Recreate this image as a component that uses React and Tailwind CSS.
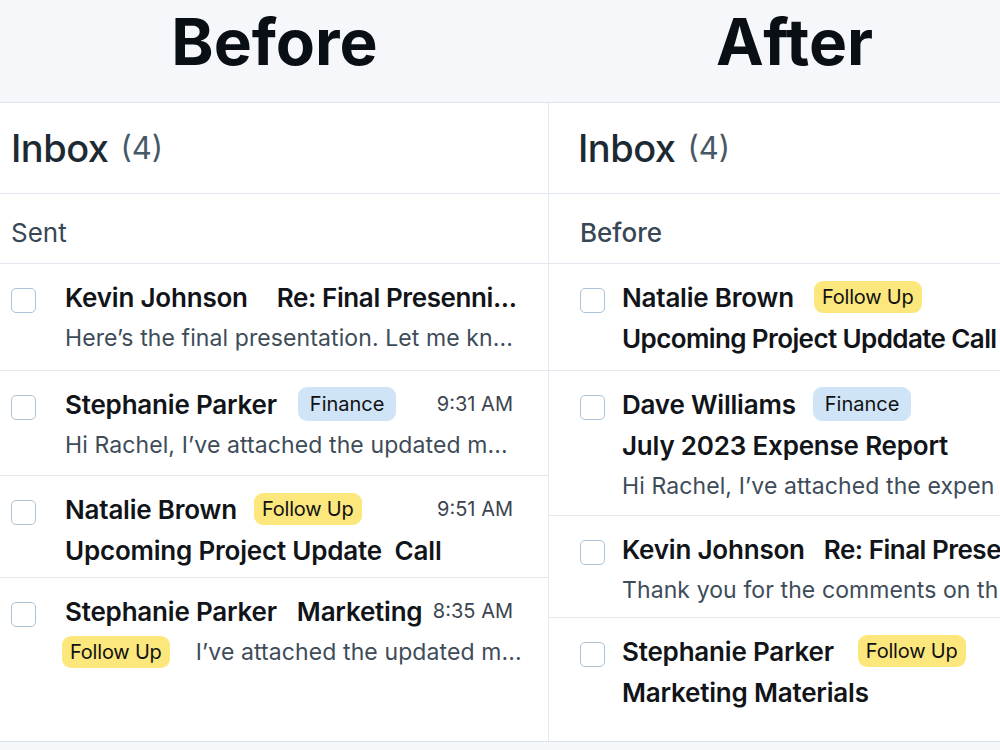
import React from 'react';

const Checkbox = () => (
    <div className="pt-[9px] shrink-0">
        <div className="w-[25px] h-[25px] rounded-[5px] border-[1.5px] border-[#adc2d4] bg-white" />
    </div>
);

const Badge = ({ color, children }) => (
    <span
        className={
            color === 'blue'
                ? 'inline-flex items-center h-[34px] px-[12px] rounded-[9px] bg-[#cfe4f6] text-[20px] text-[#111] font-normal'
                : 'inline-flex items-center h-[32px] px-[8px] rounded-[9px] bg-[#fce77c] text-[20px] text-[#111] font-normal tracking-[-0.2px]'
        }
    >
        {children}
    </span>
);

const Name = ({ children, tight }) => (
    <span className={`text-[26px] font-semibold text-[#111418] ${tight ? 'tracking-[-0.6px]' : 'tracking-[-0.2px]'}`}>{children}</span>
);

const Preview = ({ children }) => (
    <span className="text-[23px] text-[#3e4c59] tracking-[0.1px]">{children}</span>
);

const Time = ({ children }) => (
    <span className="ml-auto text-[20px] text-[#3b4550]">{children}</span>
);

// one mail row: checkbox + stacked lines
const Row = ({ h, left, gap, children, last }) => (
    <div className={`flex pt-[15px] ${left} ${gap} ${h} ${last ? 'flex-1' : 'border-b border-[#e4e9ef]'}`}>
        <Checkbox />
        <div className="flex flex-col flex-1 min-w-0">{children}</div>
    </div>
);

const Line1 = ({ children }) => <div className="h-9 flex items-center whitespace-nowrap">{children}</div>;
const Line2 = ({ children }) => <div className="h-[46px] flex items-center whitespace-nowrap">{children}</div>;

const App = () => {
    return (
        <div className="w-[1000px] h-[750px] bg-[#f6f7fa] flex flex-col overflow-hidden" style={{ fontFamily: 'Inter, "Noto Sans", sans-serif' }}>
            {/* Titles */}
            <div className="h-[102px] flex shrink-0">
                <div className="w-[549px] text-center pt-[10px] text-[64px] leading-none font-bold text-[#0a0e15]">Before</div>
                <div className="flex-1 text-center pl-[40px] pt-[10px] text-[64px] leading-none font-bold text-[#0a0e15]">After</div>
            </div>

            {/* Panels */}
            <div className="h-[640px] flex bg-white border-y border-[#dde3ea] shrink-0">
                {/* Before */}
                <div className="w-[549px] flex flex-col border-r border-[#e4e9ef]">
                    <div className="h-[91px] flex items-center px-[11px] border-b border-[#e0e6ed] shrink-0">
                        <span className="text-[38px] font-medium text-[#1e2a33] tracking-[-0.5px]">Inbox</span>
                        <span className="ml-[12px] text-[31px] text-[#475866]">(4)</span>
                    </div>
                    <div className="h-[70px] flex items-center pt-[8px] px-[11px] border-b border-[#e4e9ef] shrink-0">
                        <span className="text-[26px] text-[#384754]">Sent</span>
                    </div>

                    <Row h="h-[107px]" left="pl-[11px] pr-[31px]" gap="gap-[29px]">
                        <Line1>
                            <Name>Kevin Johnson</Name>
                            <span className="ml-[29px] text-[26px] font-semibold text-[#111418] tracking-[-0.4px]">Re: Final Presenni...</span>
                        </Line1>
                        <Line2><Preview>Here’s the final presentation. Let me kn...</Preview></Line2>
                    </Row>
                    <Row h="h-[105px]" left="pl-[11px] pr-[35px]" gap="gap-[29px]">
                        <Line1>
                            <Name>Stephanie Parker</Name>
                            <span className="ml-[21px]"><Badge color="blue">Finance</Badge></span>
                            <Time>9:31 AM</Time>
                        </Line1>
                        <Line2><Preview>Hi Rachel, I’ve attached the updated m...</Preview></Line2>
                    </Row>
                    <Row h="h-[102px]" left="pl-[11px] pr-[35px]" gap="gap-[29px]">
                        <Line1>
                            <Name>Natalie Brown</Name>
                            <span className="ml-[17px]"><Badge color="yellow">Follow Up</Badge></span>
                            <Time>9:51 AM</Time>
                        </Line1>
                        <Line2><Name>Upcoming Project Update&nbsp; Call</Name></Line2>
                    </Row>
                    <Row left="pl-[11px] pr-[35px]" gap="gap-[29px]" last>
                        <Line1>
                            <Name>Stephanie Parker</Name>
                            <span className="ml-[20px]"><Name>Marketing</Name></span>
                            <Time>8:35 AM</Time>
                        </Line1>
                        <Line2>
                            <span className="-ml-[3px]"><Badge color="yellow">Follow Up</Badge></span>
                            <span className="ml-[26px]"><Preview>I’ve attached the updated m...</Preview></span>
                        </Line2>
                    </Row>
                </div>

                {/* After */}
                <div className="flex-1 min-w-0 flex flex-col overflow-hidden">
                    <div className="h-[91px] flex items-center pl-[29px] border-b border-[#e0e6ed] shrink-0 whitespace-nowrap">
                        <span className="text-[38px] font-medium text-[#1e2a33] tracking-[-0.5px]">Inbox</span>
                        <span className="ml-[12px] text-[31px] text-[#475866]">(4)</span>
                    </div>
                    <div className="h-[70px] flex items-center pt-[8px] pl-[31px] border-b border-[#e4e9ef] shrink-0">
                        <span className="text-[26px] font-medium text-[#384754]">Before</span>
                    </div>

                    <Row h="h-[107px]" left="pl-[31px]" gap="gap-[17px]">
                        <Line1>
                            <Name>Natalie Brown</Name>
                            <span className="ml-[20px]"><Badge color="yellow">Follow Up</Badge></span>
                        </Line1>
                        <Line2><Name tight>Upcoming Project Upddate Call</Name></Line2>
                    </Row>
                    <Row h="h-[145px]" left="pl-[31px]" gap="gap-[17px]">
                        <Line1>
                            <Name>Dave Williams</Name>
                            <span className="ml-[17px]"><Badge color="blue">Finance</Badge></span>
                        </Line1>
                        <div className="h-[46px] flex items-center whitespace-nowrap"><Name>July 2023 Expense Report</Name></div>
                        <div className="h-9 flex items-center whitespace-nowrap"><Preview>Hi Rachel, I’ve attached the expen</Preview></div>
                    </Row>
                    <Row h="h-[102px]" left="pl-[31px]" gap="gap-[17px]">
                        <Line1>
                            <Name>Kevin Johnson</Name>
                            <span className="ml-[19px] text-[26px] font-semibold text-[#111418] tracking-[-0.5px]">Re: Final Prese</span>
                        </Line1>
                        <Line2><Preview>Thank you for the comments on th</Preview></Line2>
                    </Row>
                    <Row left="pl-[31px]" gap="gap-[17px]" last>
                        <Line1>
                            <Name>Stephanie Parker</Name>
                            <span className="ml-[24px]"><Badge color="yellow">Follow Up</Badge></span>
                        </Line1>
                        <Line2><Name>Marketing Materials</Name></Line2>
                    </Row>
                </div>
            </div>
        </div>
    );
};

export default App;
